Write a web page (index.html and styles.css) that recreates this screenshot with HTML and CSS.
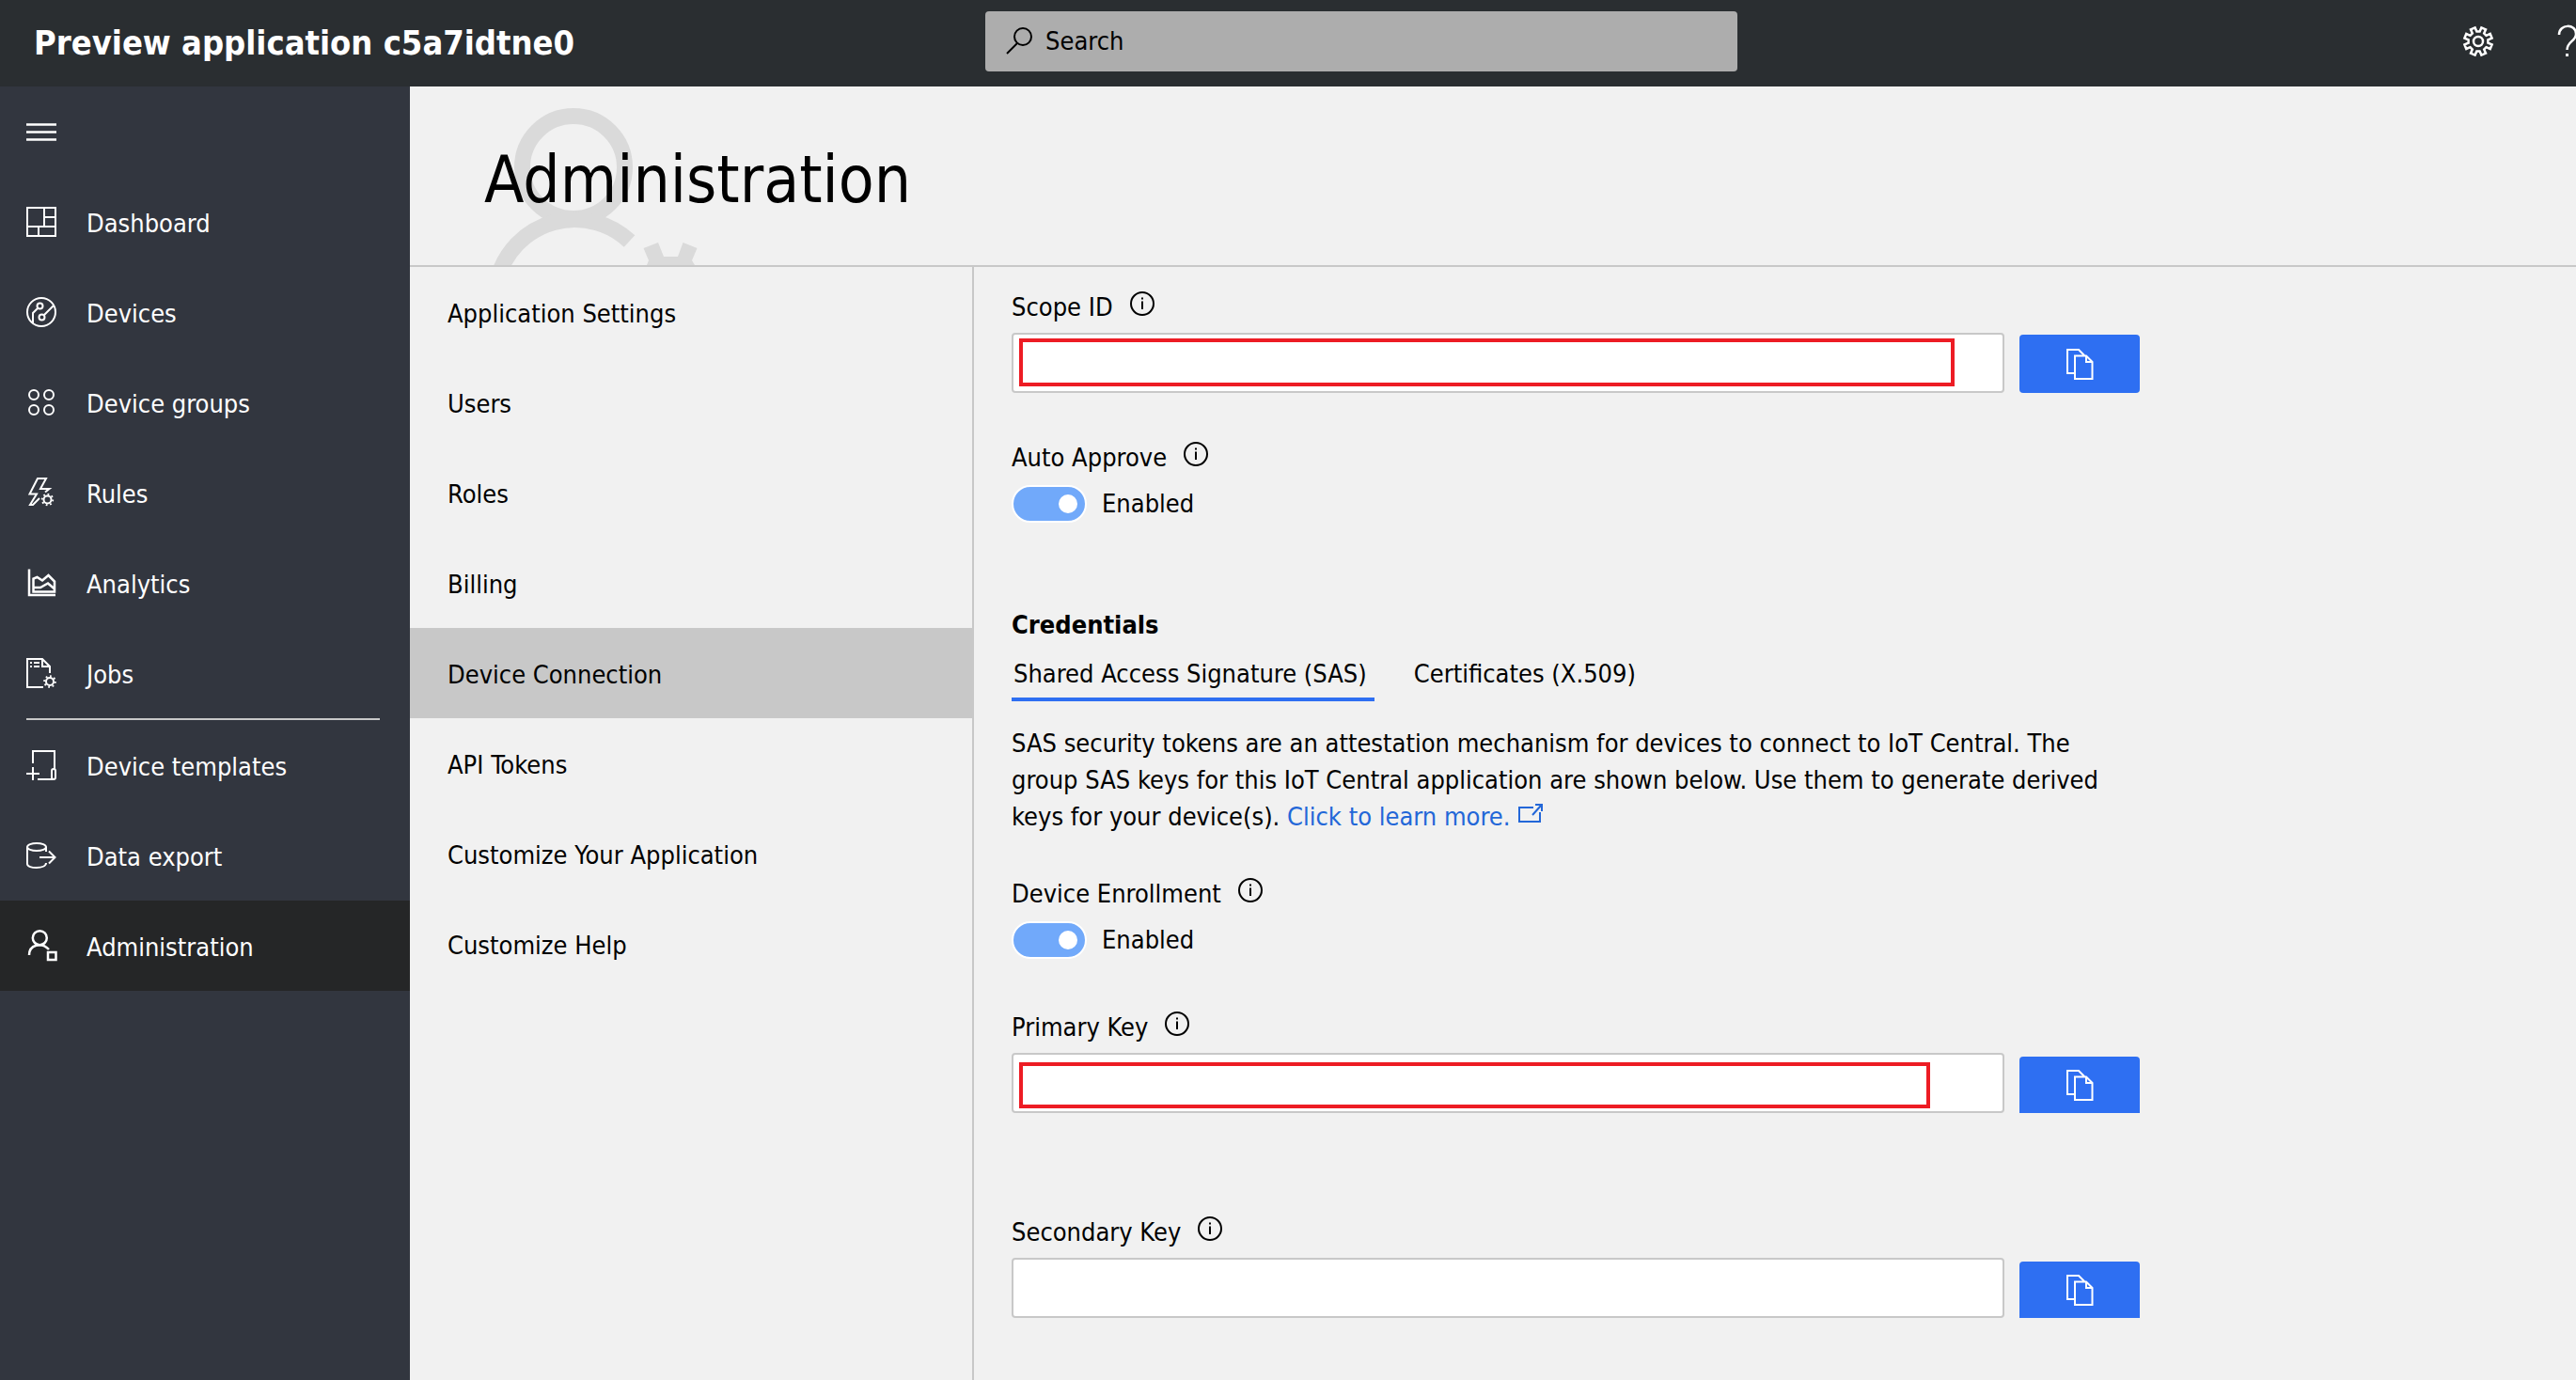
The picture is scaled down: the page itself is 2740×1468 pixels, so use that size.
FILE: index.html
```
<!DOCTYPE html>
<html lang="en">
<head>
<meta charset="utf-8">
<meta name="viewport" content="width=device-width, initial-scale=1">
<title>Administration - Preview application</title>
<link rel="stylesheet" href="styles.css">
</head>
<body>
<svg class="sprite" aria-hidden="true">
  <symbol id="info" viewBox="0 0 28 28">
    <circle cx="14" cy="14" r="12" fill="none" stroke="currentColor" stroke-width="2"/>
    <path d="M14 11.500V20M14 7.500V9.500" fill="none" stroke="currentColor" stroke-width="2"/>
  </symbol>
  <symbol id="copy" viewBox="0 0 32 36">
    <path d="M10 28H3V3H15L21 9M11 9.500H23L29.500 16V34H11ZM23 9.500V16H29.500" fill="none" stroke="currentColor" stroke-width="2"/>
  </symbol>
  <symbol id="mini-gear" viewBox="0 0 14 14">
    <circle cx="7" cy="7" r="4" fill="none" stroke="currentColor" stroke-width="2"/>
    <circle cx="7" cy="7" r="5.800" fill="none" stroke="currentColor" stroke-width="2" pathLength="16" stroke-dasharray="0.800 1.200"/>
  </symbol>
</svg>

<header class="topbar">
  <div class="app-name">Preview application c5a7idtne0</div>
  <label class="search">
    <svg class="search-icon" viewBox="0 0 32 32" aria-hidden="true"><circle cx="22" cy="11" r="9"/><path d="M16 18L5 29"/></svg>
    <input type="search" placeholder="Search" aria-label="Search">
  </label>
  <div class="actions">
    <button type="button" class="action" aria-label="Settings">
      <svg class="icon" viewBox="0 0 36 36"><path stroke-width="2.500" d="M16.400 7.600H19.600L21.400 3.400L26 5.300L24.200 9.500L26.500 11.800L30.700 10L32.600 14.600L28.400 16.400V19.600L32.600 21.400L30.700 26L26.500 24.200L24.200 26.500L26 30.700L21.400 32.600L19.600 28.400H16.400L14.600 32.600L10 30.700L11.800 26.500L9.500 24.200L5.300 26L3.400 21.400L7.600 19.600V16.400L3.400 14.600L5.300 10L9.500 11.800L11.800 9.500L10 5.300L14.600 3.400Z"/><circle cx="18" cy="18" r="5" stroke-width="2.500"/></svg>
    </button>
    <button type="button" class="action help" aria-label="Help">
      <svg class="icon" viewBox="0 0 36 36"><path stroke-width="2.500" d="M3 11C3 -1 21 -1 21 10C21 18 11.500 18 11.500 27"/><path stroke-width="3" d="M11.500 31V34"/></svg>
    </button>
  </div>
</header>

<div class="shell">
  <nav class="sidebar" aria-label="Main">
    <button type="button" class="nav-item" aria-label="Toggle menu">
      <svg class="icon" viewBox="0 0 36 36"><path stroke-width="2.500" d="M2 10.500H34M2 18.500H34M2 26.500H34"/></svg>
    </button>
    <a class="nav-item" href="#dashboard">
      <svg class="icon" viewBox="0 0 36 36"><path d="M3 3H33V33H3ZM21 3V23M21 13H33M3 23H33M15 23V33"/></svg><span>Dashboard</span></a>
    <a class="nav-item" href="#devices">
      <svg class="icon" viewBox="0 0 36 36"><circle cx="18" cy="18" r="15"/><circle cx="16.500" cy="11.500" r="3"/><circle cx="18.500" cy="23.500" r="3"/><path d="M14.500 13.500L9 19V30M20.500 21.500L31 11"/></svg><span>Devices</span></a>
    <a class="nav-item" href="#groups">
      <svg class="icon" viewBox="0 0 36 36"><circle cx="10" cy="10" r="5"/><circle cx="26" cy="10" r="5"/><circle cx="10" cy="26" r="5"/><circle cx="26" cy="26" r="5"/></svg><span>Device groups</span></a>
    <a class="nav-item" href="#rules">
      <svg class="icon" viewBox="0 0 36 36"><path d="M22 17.500L26.500 14H17L23 3H14L5.500 19.500H13L6 31H9L16 24"/><use href="#mini-gear" x="17.500" y="18.500" width="14" height="14"/></svg><span>Rules</span></a>
    <a class="nav-item" href="#analytics">
      <svg class="icon" viewBox="0 0 36 36"><path stroke-width="2.500" d="M5 3.500V31H33M9.500 27.500V13.500L13.500 12L19 15.500L25.500 10L32 16.500V27.500ZM10 23H17L25 18.500L32 24.500"/></svg><span>Analytics</span></a>
    <a class="nav-item" href="#jobs">
      <svg class="icon" viewBox="0 0 36 36"><path d="M20 33H3V3H19L27 11V18M19 3V11H27M6 7H8M10 7H16M6 11H8M10 11H16"/><use href="#mini-gear" x="20" y="20" width="14" height="14"/></svg><span>Jobs</span></a>
    <hr class="nav-rule">
    <a class="nav-item" href="#templates">
      <svg class="icon" viewBox="0 0 36 36"><path d="M9 16V3H32V22M14 33H30M2 27H16M9 20V34"/><rect x="29" y="22" width="4" height="11" rx="2"/></svg><span>Device templates</span></a>
    <a class="nav-item" href="#export">
      <svg class="icon" viewBox="0 0 36 36"><ellipse cx="13" cy="9" rx="10" ry="4"/><path d="M3 9V27C3 32.500 23 32.500 23 26M23 9V14M16 20H32M26 13.500L32.500 20L26 26.500"/></svg><span>Data export</span></a>
    <a class="nav-item is-active" href="#administration" aria-current="page">
      <svg class="icon" viewBox="0 0 36 36"><path stroke-width="2.500" d="M5 28C5 17 18 13.500 26 22M25 25H33.500V33H25Z"/><circle cx="16.300" cy="9.700" r="7.500" stroke-width="2.500"/></svg><span>Administration</span></a>
  </nav>

  <main class="main">
    <div class="page-head">
      <svg class="watermark" viewBox="0 0 240 168" aria-hidden="true">
        <circle cx="94" cy="64" r="54.500"/>
        <path d="M14 180A85 85 0 0 1 153.500 142.500"/>
        <path class="solid" d="M168.500 150L184 144L190 159H205L210.500 144L225.500 150L220 163L223 168H172L174 163Z"/>
      </svg>
      <h1 class="page-title">Administration</h1>
    </div>

    <div class="columns">
      <nav class="subnav" aria-label="Administration">
        <a href="#settings">Application Settings</a>
        <a href="#users">Users</a>
        <a href="#roles">Roles</a>
        <a href="#billing">Billing</a>
        <a href="#connection" class="is-active" aria-current="page">Device Connection</a>
        <a href="#tokens">API Tokens</a>
        <a href="#customize">Customize Your Application</a>
        <a href="#help">Customize Help</a>
      </nav>

      <form class="content">
        <section class="field">
          <div class="label-row"><label for="scope">Scope ID</label><button type="button" class="info" aria-label="About Scope ID"><svg><use href="#info"/></svg></button></div>
          <div class="key-row">
            <div class="key-box"><input class="key-input" id="scope" type="text" readonly><span class="mask mask-scope"></span></div>
            <button type="button" class="copy copy-tall" aria-label="Copy Scope ID"><svg><use href="#copy"/></svg></button>
          </div>
        </section>

        <section class="field approve">
          <div class="label-row"><label for="approve">Auto Approve</label><button type="button" class="info" aria-label="About Auto Approve"><svg><use href="#info"/></svg></button></div>
          <div class="switch-row"><input class="switch" id="approve" type="checkbox" role="switch" checked><span>Enabled</span></div>
        </section>

        <h2 class="section-title">Credentials</h2>
        <div class="tabs" role="tablist">
          <button type="button" class="tab is-selected" role="tab" aria-selected="true">Shared Access Signature (SAS)</button>
          <button type="button" class="tab" role="tab" aria-selected="false">Certificates (X.509)</button>
        </div>
        <p class="intro">SAS security tokens are an attestation mechanism for devices to connect to IoT Central. The group SAS keys for this IoT Central application are shown below. Use them to generate derived keys for your device(s). <a class="link" href="#learn">Click to learn more. <svg class="external" viewBox="0 0 28 22" aria-hidden="true"><path d="M17 5H2V20H24V10M16 13L25 3M19 2H26V9"/></svg></a></p>

        <section class="field enrollment">
          <div class="label-row"><label for="enroll">Device Enrollment</label><button type="button" class="info" aria-label="About Device Enrollment"><svg><use href="#info"/></svg></button></div>
          <div class="switch-row"><input class="switch" id="enroll" type="checkbox" role="switch" checked><span>Enabled</span></div>
        </section>

        <section class="field primary">
          <div class="label-row"><label for="primary">Primary Key</label><button type="button" class="info" aria-label="About Primary Key"><svg><use href="#info"/></svg></button></div>
          <div class="key-row">
            <div class="key-box"><input class="key-input" id="primary" type="text" readonly><span class="mask mask-primary"></span></div>
            <button type="button" class="copy" aria-label="Copy Primary Key"><svg><use href="#copy"/></svg></button>
          </div>
        </section>

        <section class="field secondary">
          <div class="label-row"><label for="secondary">Secondary Key</label><button type="button" class="info" aria-label="About Secondary Key"><svg><use href="#info"/></svg></button></div>
          <div class="key-row">
            <div class="key-box"><input class="key-input" id="secondary" type="text" readonly></div>
            <button type="button" class="copy" aria-label="Copy Secondary Key"><svg><use href="#copy"/></svg></button>
          </div>
        </section>
      </form>
    </div>
  </main>
</div>
</body>
</html>
```
FILE: styles.css
```
*, *::before, *::after { box-sizing: border-box; }

body {
  margin: 0;
  min-height: 100vh;
  display: flex;
  flex-direction: column;
  background: #f1f1f1;
  color: #000;
  font: 27px/36px "DejaVu Sans Condensed", "DejaVu Sans", Tahoma, sans-serif;
}

button, input { font: inherit; color: inherit; }

button {
  margin: 0;
  padding: 0;
  border: 0;
  background: none;
  cursor: pointer;
}

a { color: inherit; text-decoration: none; }

svg { display: block; flex: none; }

.sprite { position: absolute; width: 0; height: 0; }

.icon {
  width: 36px;
  height: 36px;
  fill: none;
  stroke: currentColor;
  stroke-width: 2;
}

/* Top bar */
.topbar {
  display: grid;
  grid-template-columns: 262fr 200fr 223fr;
  height: 92px;
  padding-bottom: 4px;
  align-items: center;
  overflow: hidden;
  background: #2a2e31;
  color: #fff;
}

.app-name {
  padding: 4px 0 0 36px;
  font-size: 36px;
  font-weight: 700;
  white-space: nowrap;
}

.search {
  display: flex;
  align-items: center;
  gap: 14px;
  height: 64px;
  padding: 0 18px;
  border-radius: 4px;
  background: #adadad;
  color: #000;
}

.search-icon {
  width: 32px;
  height: 32px;
  fill: none;
  stroke: currentColor;
  stroke-width: 2;
}

.search input {
  flex: 1;
  min-width: 0;
  padding: 0;
  border: 0;
  outline: 0;
  background: none;
  appearance: none;
}

.search input::placeholder { color: #000; opacity: 1; }

.actions {
  display: flex;
  justify-content: flex-end;
  gap: 65px;
}

.help { width: 21px; }

/* Shell */
.shell { display: flex; flex: 1; }

.sidebar {
  flex: 0 0 436px;
  background: #32363f;
  color: #fff;
}

.nav-item {
  display: flex;
  align-items: center;
  gap: 30px;
  width: 100%;
  height: 96px;
  padding: 0 26px;
}

.nav-item span { padding-top: 4px; }

.nav-item.is-active { background: #252627; }

.nav-rule {
  height: 2px;
  margin: 0 32px 0 28px;
  border: 0;
  background: #c8c8c8;
}

.main {
  display: flex;
  flex: 1;
  flex-direction: column;
  min-width: 0;
}

.page-head {
  position: relative;
  height: 192px;
  padding: 57px 80px 0 79px;
  border-bottom: 2px solid #c8c8c8;
  overflow: hidden;
}

/* Decorative person behind the title */
.watermark {
  position: absolute;
  left: 80px;
  bottom: 0;
  width: 240px;
  height: 168px;
  fill: none;
  stroke: #dadada;
  stroke-width: 17;
}

.watermark .solid { fill: #dadada; stroke: none; }

.page-title {
  position: relative;
  margin: 0;
  font-size: 69px;
  font-weight: 400;
  line-height: 84px;
}

.columns { display: flex; flex: 1; }

.subnav {
  flex: 0 0 600px;
  border-right: 2px solid #c8c8c8;
}

.subnav a {
  display: flex;
  align-items: center;
  height: 96px;
  padding: 4px 40px 0;
}

.subnav .is-active { background: #c8c8c8; }

/* Device connection form */
.content {
  flex: 0 1 1280px;
  min-width: 0;
  padding: 25px 40px 40px;
}

.approve { margin-top: 51px; }
.enrollment { margin-top: 45px; }
.primary { margin-top: 55px; }
.secondary { margin-top: 109px; }

.label-row {
  display: flex;
  gap: 17px;
  height: 36px;
}

.info { width: 28px; height: 28px; }
.info svg { width: 28px; height: 28px; }

.key-row {
  display: flex;
  align-items: flex-end;
  gap: 16px;
  margin-top: 9px;
}

.key-box { position: relative; flex: 1; height: 64px; }

.key-input {
  display: block;
  width: 100%;
  height: 64px;
  padding: 0 16px;
  border: 2px solid #c8c8c8;
  border-radius: 4px;
  outline: 0;
  background: #fff;
}

/* Red frames laid over the hidden values */
.mask {
  position: absolute;
  left: 8px;
  border: 4px solid #ed1c24;
  background: #fff;
  pointer-events: none;
}

.mask-scope { top: 6px; right: 53px; bottom: 7px; }
.mask-primary { top: 10px; right: 79px; bottom: 5px; }

.copy {
  display: flex;
  align-items: center;
  justify-content: center;
  width: 128px;
  height: 60px;
  border-radius: 4px 4px 0 0;
  background: #2e6ff2;
  color: #fff;
}

.copy-tall { height: 62px; border-radius: 4px; }

.copy svg { width: 32px; height: 36px; }

.switch-row {
  display: flex;
  align-items: center;
  gap: 16px;
  margin-top: 11px;
}

.switch {
  display: flex;
  align-items: center;
  justify-content: flex-end;
  width: 80px;
  height: 40px;
  margin: 0;
  padding: 0 8px;
  border: 2px solid #fff;
  border-radius: 20px;
  background: #71a9fa;
  appearance: none;
}

.switch::before {
  content: "";
  width: 20px;
  height: 20px;
  border-radius: 50%;
  background: #fff;
}

.switch:not(:checked) { justify-content: flex-start; background: #8a8a8a; }

.section-title {
  margin: 91px 0 16px;
  font-size: 27px;
  font-weight: 700;
}

.tabs { display: flex; gap: 40px; }

.tab {
  padding: 0 8px 7px 2px;
  border-bottom: 4px solid transparent;
  white-space: nowrap;
}

.tab.is-selected { border-color: #2e6ff2; }

.intro { margin: 25px 0 0; line-height: 39px; }

.link { color: #2367d8; white-space: nowrap; }

.external {
  display: inline-block;
  width: 28px;
  height: 22px;
  vertical-align: 2px;
  fill: none;
  stroke: currentColor;
  stroke-width: 2;
}
```
